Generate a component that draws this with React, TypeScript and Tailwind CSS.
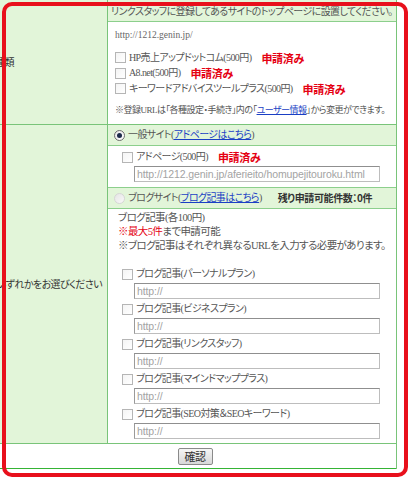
import React from 'react'

const Checkbox = () => (
  <span className="inline-block w-[11px] h-[11px] border border-[#b5b5b5] bg-gradient-to-br from-[#f4f4f4] to-white mr-[3px] shrink-0" />
)

const Radio = ({ checked }: { checked?: boolean }) =>
  checked ? (
    <span className="inline-flex items-center justify-center w-[11px] h-[11px] rounded-full border border-[#6d6d6d] bg-gradient-to-br from-[#e8e8e8] to-white mr-[3px] shrink-0">
      <span className="w-[5px] h-[5px] rounded-full bg-[#1c2a4a]" />
    </span>
  ) : (
    <span className="inline-block w-[11px] h-[11px] rounded-full border border-[#d6d6d6] bg-gradient-to-br from-[#e6e6e6] to-[#f8f8f8] mr-[3px] shrink-0" />
  )

const Applied = () => (
  <span className="ml-[10px] font-bold text-[11px] tracking-[-0.3px] text-[#e50012] font-['Noto_Sans_CJK_JP',sans-serif]">申請済み</span>
)

const TextBox = ({ value }: { value?: string }) => (
  <div className="ml-[134px] w-[246px] h-[16px] border border-[#bdbdbd] border-t-[#8f8f8f] border-l-[#9a9a9a] bg-white flex items-center px-[2px] font-['Liberation_Sans',sans-serif] text-[10.5px] tracking-[-0.1px] text-[#a3a3a3] overflow-hidden whitespace-nowrap">
    {value ?? 'http://'}
  </div>
)

const blogPlans = [
  'ブログ記事(パーソナルプラン)',
  'ブログ記事(ビジネスプラン)',
  'ブログ記事(リンクスタッフ)',
  'ブログ記事(マインドマッププラス)',
  'ブログ記事(SEO対策＆SEOキーワード)',
]

export default function App() {
  return (
    <div className="relative w-[411px] h-[481px] bg-white overflow-hidden font-['Liberation_Serif','Noto_Sans_CJK_JP',serif] text-[10px] tracking-[-0.6px] text-[#555] [font-feature-settings:'palt'] leading-[14px]">
      <div className="ml-[-6px] w-[403px] border-r border-[#79c479]">
        {/* row 1 */}
        <div className="flex h-[125px] border-b border-[#79c479]">
          <div className="w-[114px] shrink-0 bg-[#e2f5d9] border-r border-[#79c479] flex items-center pl-[1px] text-[#333] font-['Noto_Sans_CJK_JP',sans-serif]">
            種類
          </div>
          <div className="flex-1 flex flex-col">
            <div className="h-[22px] bg-[#e2f5d9] border-b border-[#8ccf8c] flex items-center pl-[3px] font-['Noto_Sans_CJK_JP',sans-serif] whitespace-nowrap">
              リンクスタッフに登録してあるサイトのトップページに設置してください。
            </div>
            <div className="flex-1 pl-[7px]">
              <div className="mt-[6px] h-[14px] text-[9.5px] tracking-normal text-[#666]">http://1212.genin.jp/</div>
              <div className="mt-[8px] h-[15.5px] flex items-center">
                <Checkbox />
                HP売上アップドットコム(500円)
                <Applied />
              </div>
              <div className="h-[15.5px] flex items-center">
                <Checkbox />
                A8.net(500円)
                <Applied />
              </div>
              <div className="h-[15.5px] flex items-center">
                <Checkbox />
                キーワードアドバイスツールプラス(500円)
                <Applied />
              </div>
              <div className="mt-[6.5px] h-[14px] flex items-center text-[9px] tracking-[-0.5px] whitespace-nowrap">
                ※登録URLは「各種設定・手続き」内の「
                <span className="text-[#1a3fc4] underline">ユーザー情報</span>
                」から変更ができます。
              </div>
            </div>
          </div>
        </div>

        {/* row 2 */}
        <div className="flex h-[319px] border-b border-[#79c479]">
          <div className="w-[114px] shrink-0 bg-[#e2f5d9] border-r border-[#79c479] flex items-center pl-[3px] text-[#333] font-['Noto_Sans_CJK_JP',sans-serif] whitespace-nowrap">
            いずれかをお選びください
          </div>
          <div className="flex-1 flex flex-col">
            <div className="h-[21px] bg-[#e2f5d9] border-b border-[#8ccf8c] flex items-center pl-[6px]">
              <Radio checked />
              一般サイト(
              <span className="text-[#1a3fc4] underline">アドページはこちら</span>)
            </div>
            <div className="h-[42px] border-b border-[#8ccf8c] pt-[4px]">
              <div className="h-[14px] flex items-center pl-[14px]">
                <Checkbox />
                アドページ(500円)
                <Applied />
              </div>
              <div className="mt-[2px] -ml-[108px]">
                <TextBox value="http://1212.genin.jp/aferieito/homupejitouroku.html" />
              </div>
            </div>
            <div className="h-[21px] bg-[#e2f5d9] border-b border-[#8ccf8c] flex items-center pl-[6px] whitespace-nowrap">
              <Radio />
              ブログサイト(
              <span className="text-[#1a3fc4] underline">ブログ記事はこちら</span>)
              <span className="ml-[16px] font-bold text-[10px] tracking-[-0.4px] text-[#333] font-['Noto_Sans_CJK_JP',sans-serif]">残り申請可能件数：0件</span>
            </div>
            <div className="flex-1 pt-[2px]">
              <div className="pl-[10px] text-[10.5px] tracking-[-0.6px]">
                <div>ブログ記事(各100円)</div>
                <div>
                  <span className="text-[#e50012]">※最大5件</span>まで申請可能
                </div>
                <div className="whitespace-nowrap">※ブログ記事はそれぞれ異なるURLを入力する必要があります。</div>
              </div>
              <div className="mt-[14px] flex flex-col gap-[3px]">
                {blogPlans.map((plan) => (
                  <div key={plan}>
                    <div className="h-[14px] flex items-center pl-[14px]">
                      <Checkbox />
                      {plan}
                    </div>
                    <div className="mt-[2px] -ml-[108px]">
                      <TextBox />
                    </div>
                  </div>
                ))}
              </div>
            </div>
          </div>
        </div>

        {/* row 3 */}
        <div className="h-[25px] border-b border-[#35b435] flex items-center justify-center">
          <button className="w-[35px] h-[17px] rounded-[2px] border border-[#8a8a8a] bg-gradient-to-b from-[#f6f6f6] to-[#d8d8d8] text-[11px] leading-none text-[#333] font-['Noto_Sans_CJK_JP',sans-serif]">
            確認
          </button>
        </div>
      </div>

      {/* red annotation frame */}
      <div className="absolute left-[2px] top-[2px] w-[406px] h-[475px] border-[4px] border-[#e8101c] rounded-[10px] pointer-events-none" />
    </div>
  )
}
